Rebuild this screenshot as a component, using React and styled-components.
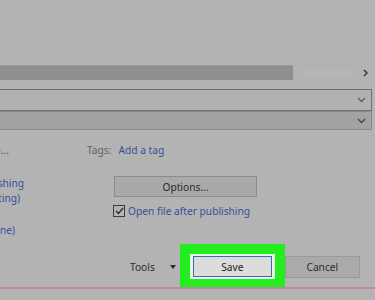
import React from 'react'
import styled, {createGlobalStyle} from 'styled-components'

const Global = createGlobalStyle`
  *, *::before, *::after { box-sizing: border-box; }
  html, body { margin: 0; padding: 0; background: #b3b3b3; overflow: hidden; }
  body { font-family: "Noto Sans", "Open Sans", sans-serif; }
`

const Page = styled.div`
  width: 375px;
  height: 300px;
  background: #b3b3b3;
  display: flex;
  flex-direction: column;
  overflow: hidden;
`

const TopSpace = styled.div`
  height: 65px;
`

const ScrollRow = styled.div`
  height: 15px;
  display: flex;
  align-items: center;
`

const Thumb = styled.div`
  width: 293px;
  height: 15px;
  background: #8f8f8f;
  border-top: 1px solid #999;
`

const Track = styled.div`
  flex: 1;
  height: 14px;
  display: flex;
  align-items: center;
  padding: 0 6px 0 8px;
  gap: 12px;
`

const TrackLight = styled.div`
  flex: 1;
  height: 5px;
  background: #b7b7b7;
`

const Select = styled.div`
  height: ${p => p.h}px;
  margin-top: ${p => p.top}px;
  margin-right: 3px;
  background: ${p => p.fill};
  border: 1px solid ${p => p.line};
  border-left: none;
  display: flex;
  align-items: center;
  justify-content: flex-end;
  padding-right: 5px;
`

const Body = styled.div`
  display: flex;
  padding-top: 13px;
`

const LeftCol = styled.div`
  width: 87px;
  display: flex;
  flex-direction: column;
`

const Clip = styled.div`
  width: ${p => p.end}px;
  display: flex;
  justify-content: flex-end;
  overflow: hidden;
  white-space: nowrap;
  font-size: 10.2px;
  line-height: 15px;
  color: ${p => p.muted ? '#5c5c5c' : '#37509a'};
  margin-top: ${p => p.top}px;
`

const RightCol = styled.div`
  display: flex;
  flex-direction: column;
`

const TagsRow = styled.div`
  display: flex;
  gap: 7px;
  font-size: 10.2px;
  line-height: 14px;
`

const Label = styled.span`
  color: #5f5f5f;
`

const Link = styled.span`
  color: #37509a;
`

const OptionsButton = styled.div`
  margin: 19px 0 0 27px;
  width: 143px;
  height: 21px;
  background: #a9a9a9;
  border: 1px solid #8c8c8c;
  display: flex;
  align-items: center;
  justify-content: center;
  font-size: 10.2px;
  color: #2a2a2a;
`

const CheckRow = styled.div`
  margin: 7px 0 0 26px;
  display: flex;
  align-items: center;
  gap: 3px;
  font-size: 10.2px;
  line-height: 14px;
  color: #37509a;
`

const Box = styled.div`
  width: 12px;
  height: 12px;
  border: 1px solid #3c3c3c;
  display: flex;
  align-items: center;
  justify-content: center;
`

const Footer = styled.div`
  margin-top: 6px;
  display: flex;
  align-items: center;
  height: 45px;
  padding-left: 130px;
`

const Tools = styled.span`
  font-size: 10.2px;
  color: #2c2c2c;
`

const Caret = styled.span`
  margin-left: 15px;
  width: 0;
  height: 0;
  border-left: 3.5px solid transparent;
  border-right: 3.5px solid transparent;
  border-top: 4px solid #2a2a2a;
`

const Highlight = styled.div`
  margin-left: 4px;
  width: 105px;
  height: 45px;
  border: 10px solid #22ee1f;
  background: #e8f4e8;
  padding: 0 3px;
  display: flex;
  align-items: center;
`

const SaveButton = styled.div`
  flex: 1;
  height: 21px;
  border: 1px solid #3d6ab5;
  background: #dcdcdc;
  display: flex;
  align-items: center;
  justify-content: center;
  font-size: 10.2px;
  color: #1e1e1e;
`

const CancelButton = styled.div`
  width: 75px;
  height: 22px;
  background: #aaaaaa;
  border: 1px solid #999;
  display: flex;
  align-items: center;
  justify-content: center;
  font-size: 10.2px;
  color: #2a2a2a;
`

const BottomLine = styled.div`
  height: 2px;
  background: #c2899a;
  margin-top: -2px;
`

const Chevron = ({dark}) => (
  <svg width="9" height="6" viewBox="0 0 9 6">
    <path d="M1 1l3.5 3.5L8 1" fill="none" stroke={dark ? '#444' : '#5a5a5a'} strokeWidth="1.3" />
  </svg>
)

const App = () => {
  return (
    <Page>
      <Global />
      <TopSpace />
      <ScrollRow>
        <Thumb />
        <Track>
          <TrackLight />
          <svg width="6" height="8" viewBox="0 0 6 8">
            <path d="M1 1l3 3-3 3" fill="none" stroke="#333" strokeWidth="1.4" />
          </svg>
        </Track>
      </ScrollRow>
      <Select h={22} top={9} fill="#b1b1b1" line="#707070"><Chevron /></Select>
      <Select h={19} top={0} fill="#a3a3a3" line="#8a8a8a"><Chevron dark /></Select>
      <Body>
        <LeftCol>
          <Clip muted end={9} top={0}>Title...</Clip>
          <Clip end={24} top={18}>Standard (publishing</Clip>
          <Clip end={20} top={0}>online and printing)</Clip>
          <Clip end={15} top={17}>size (publishing online)</Clip>
        </LeftCol>
        <RightCol>
          <TagsRow>
            <Label>Tags:</Label>
            <Link>Add a tag</Link>
          </TagsRow>
          <OptionsButton>Options...</OptionsButton>
          <CheckRow>
            <Box>
              <svg width="9" height="8" viewBox="0 0 9 8">
                <path d="M1 4l2.5 2.5L8 1" fill="none" stroke="#2a2a2a" strokeWidth="1.3" />
              </svg>
            </Box>
            Open file after publishing
          </CheckRow>
        </RightCol>
      </Body>
      <Footer>
        <Tools>Tools</Tools>
        <Caret />
        <Highlight>
          <SaveButton>Save</SaveButton>
        </Highlight>
        <CancelButton>Cancel</CancelButton>
      </Footer>
      <BottomLine />
    </Page>
  )
}

export default App
